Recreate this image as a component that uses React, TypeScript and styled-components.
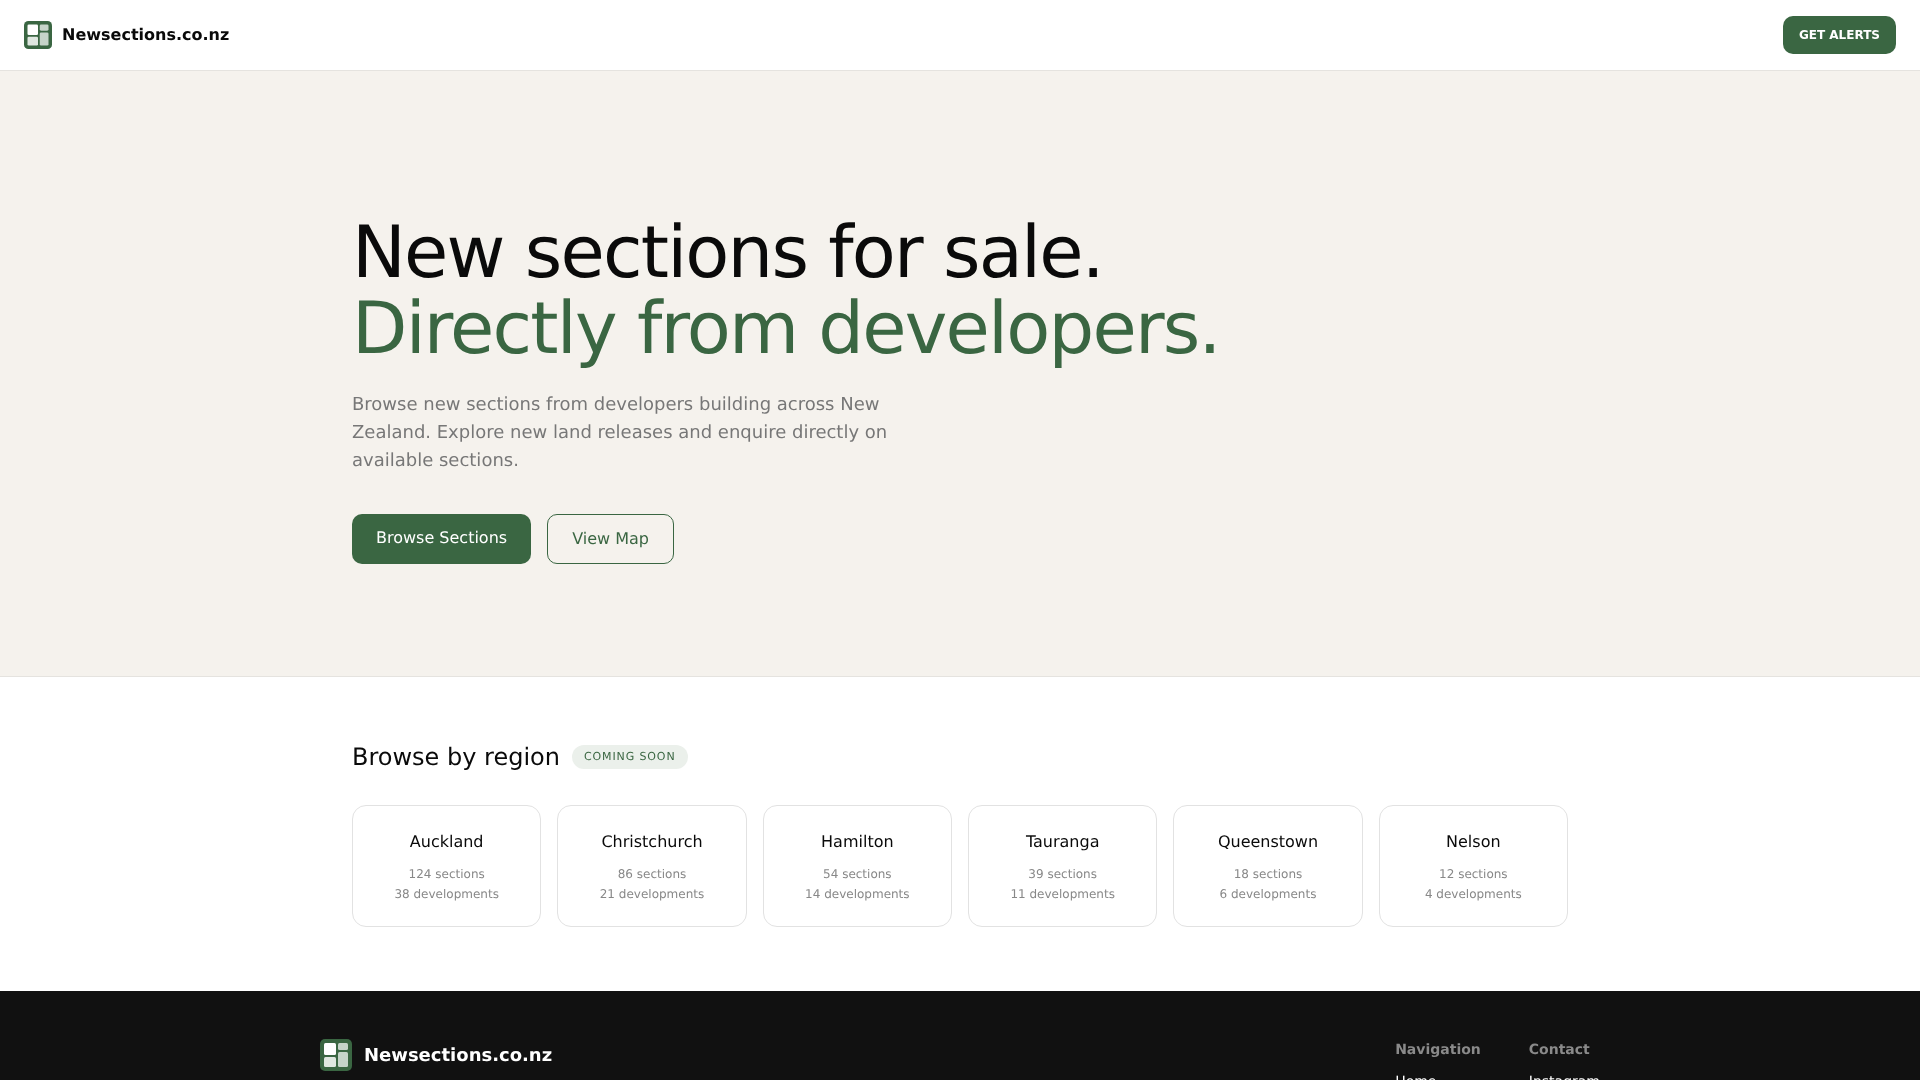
import * as React from "react";
import styled, { createGlobalStyle } from "styled-components";

const GlobalStyle = createGlobalStyle`
  html, body {
    margin: 0;
    padding: 0;
    background: #fff;
    font-family: "DejaVu Sans", sans-serif;
    color: #0a0a0a;
    text-rendering: geometricPrecision;
    -webkit-font-smoothing: antialiased;
  }
  #root { will-change: transform; }
  * { box-sizing: border-box; }
`;

const Header = styled.header`
  height: 71px;
  padding: 0 24px;
  display: flex;
  align-items: center;
  justify-content: space-between;
  background: #fff;
  border-bottom: 1px solid #e5e3df;
`;

const Brand = styled.div<{ $footer?: boolean }>`
  display: flex;
  align-items: ${(p) => (p.$footer ? "flex-start" : "center")};
  align-self: ${(p) => (p.$footer ? "flex-start" : "auto")};
  gap: ${(p) => (p.$footer ? "12px" : "10px")};
  font-weight: 700;
  font-size: ${(p) => (p.$footer ? "18px" : "16px")};
  line-height: ${(p) => (p.$footer ? "34px" : "24px")};
  color: ${(p) => (p.$footer ? "#fff" : "#0a0a0a")};
`;

const AlertButton = styled.button`
  height: 38px;
  padding: 0 16px;
  border: none;
  border-radius: 10px;
  background: #3a6642;
  color: #fff;
  font-family: inherit;
  font-size: 12px;
  font-weight: 700;
`;

const Hero = styled.section`
  height: 606px;
  padding-top: 30px;
  background: #f5f2ed;
  border-bottom: 1px solid #e5e3df;
  display: flex;
  align-items: center;
`;

const Container = styled.div`
  width: 1280px;
  margin: 0 auto;
  padding: 0 32px;
`;

const Title = styled.h1`
  margin: 0 0 25px;
  font-size: 72px;
  font-weight: 400;
  line-height: 76px;
  letter-spacing: -0.025em;
  color: #0a0a0a;
`;

const Accent = styled.span`
  display: block;
  color: #3a6642;
`;

const Lead = styled.p`
  margin: 0 0 39px;
  width: 560px;
  font-size: 18px;
  line-height: 28px;
  color: #777;
`;

const Actions = styled.div`
  display: flex;
  gap: 16px;
`;

const HeroButton = styled.a<{ $outline?: boolean }>`
  padding: 14px 24px;
  border-radius: 10px;
  font-size: 16px;
  line-height: 20px;
  border: ${(p) => (p.$outline ? "1px solid #3a6642" : "none")};
  background: ${(p) => (p.$outline ? "transparent" : "#3a6642")};
  color: ${(p) => (p.$outline ? "#3a6642" : "#fff")};
`;

const Regions = styled.section`
  height: 314px;
  padding-top: 64px;
  background: #fff;
`;

const RegionHead = styled.div`
  display: flex;
  align-items: center;
  gap: 12px;
  margin-bottom: 32px;
`;

const RegionTitle = styled.h2`
  margin: 0;
  font-size: 24px;
  font-weight: 400;
  line-height: 32px;
`;

const SoonBadge = styled.span`
  padding: 4px 12px;
  border-radius: 999px;
  background: #ebf0eb;
  color: #3a6642;
  font-size: 11px;
  line-height: 16px;
  letter-spacing: 0.08em;
`;

const CardRow = styled.div`
  display: grid;
  grid-template-columns: repeat(6, 1fr);
  gap: 16px;
`;

const Card = styled.div`
  height: 122px;
  padding: 24px 16px;
  border: 1px solid #e2e2e2;
  border-radius: 14px;
  text-align: center;
`;

const CardName = styled.div`
  font-size: 16px;
  line-height: 24px;
  margin-bottom: 10px;
`;

const CardMeta = styled.div`
  font-size: 12px;
  line-height: 20px;
  color: #888;
`;

const Footer = styled.footer`
  height: 400px;
  background: #111;
`;

const FooterInner = styled.div`
  width: 1280px;
  margin: 0 auto;
  padding-top: 48px;
  display: flex;
  justify-content: space-between;
`;

const FooterColumns = styled.div`
  display: flex;
  gap: 48px;
`;

const ColumnTitle = styled.div`
  font-size: 14px;
  font-weight: 700;
  line-height: 22px;
  color: #8a8a8a;
  margin-bottom: 11px;
`;

const ColumnLink = styled.div`
  font-size: 14px;
  line-height: 20px;
  color: #fff;
`;

function Logo({ size }: { size: number }) {
  return (
    <svg width={size} height={size} viewBox="0 0 32 32" aria-hidden="true">
      <rect width="32" height="32" rx="5" fill="#3a6642" />
      <rect x="4" y="4" width="12" height="12" rx="1.5" fill="#fff" />
      <rect x="18" y="4" width="10" height="7" rx="1.5" fill="#c6d4c9" />
      <rect x="4" y="18" width="12" height="10" rx="1.5" fill="#dfe7e0" />
      <rect x="18" y="13" width="10" height="15" rx="1.5" fill="#c6d4c9" />
    </svg>
  );
}

const regions = [
  { name: "Auckland", sections: 124, developments: 38 },
  { name: "Christchurch", sections: 86, developments: 21 },
  { name: "Hamilton", sections: 54, developments: 14 },
  { name: "Tauranga", sections: 39, developments: 11 },
  { name: "Queenstown", sections: 18, developments: 6 },
  { name: "Nelson", sections: 12, developments: 4 },
];

export default function App() {
  return (
    <>
      <GlobalStyle />
      <Header>
        <Brand>
          <Logo size={28} />
          Newsections.co.nz
        </Brand>
        <AlertButton>GET ALERTS</AlertButton>
      </Header>
      <Hero>
        <Container>
          <Title>
            New sections for sale.
            <Accent>Directly from developers.</Accent>
          </Title>
          <Lead>
            Browse new sections from developers building across New Zealand.
            Explore new land releases and enquire directly on available
            sections.
          </Lead>
          <Actions>
            <HeroButton>Browse Sections</HeroButton>
            <HeroButton $outline>View Map</HeroButton>
          </Actions>
        </Container>
      </Hero>
      <Regions>
        <Container>
          <RegionHead>
            <RegionTitle>Browse by region</RegionTitle>
            <SoonBadge>COMING SOON</SoonBadge>
          </RegionHead>
          <CardRow>
            {regions.map((r) => (
              <Card key={r.name}>
                <CardName>{r.name}</CardName>
                <CardMeta>{r.sections} sections</CardMeta>
                <CardMeta>{r.developments} developments</CardMeta>
              </Card>
            ))}
          </CardRow>
        </Container>
      </Regions>
      <Footer>
        <FooterInner>
          <Brand $footer>
            <Logo size={32} />
            Newsections.co.nz
          </Brand>
          <FooterColumns>
            <div>
              <ColumnTitle>Navigation</ColumnTitle>
              <ColumnLink>Home</ColumnLink>
            </div>
            <div>
              <ColumnTitle>Contact</ColumnTitle>
              <ColumnLink>Instagram</ColumnLink>
            </div>
          </FooterColumns>
        </FooterInner>
      </Footer>
    </>
  );
}
